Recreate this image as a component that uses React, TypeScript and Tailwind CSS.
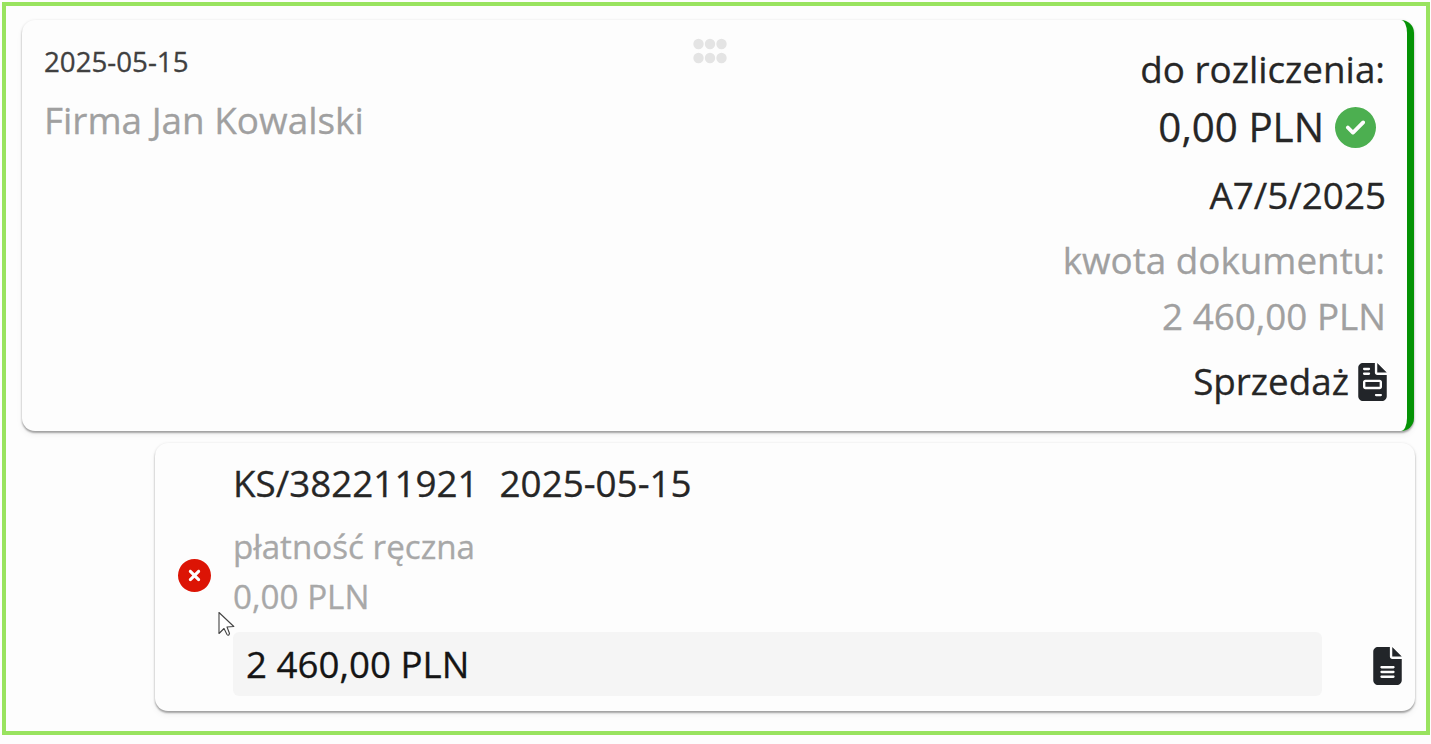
import { FaCircleCheck, FaCircleXmark, FaFileInvoice, FaFileLines } from 'react-icons/fa6';

const cardClass =
  'rounded-[13px] bg-[#fdfdfd] shadow-[0_2px_2px_rgba(0,0,0,0.32),0_0_3px_rgba(0,0,0,0.08),0_4px_6px_rgba(0,0,0,0.05)]';

function DragHandle() {
  return (
    <svg viewBox="0 0 34 26" className="absolute left-[671px] top-[18px] h-[26px] w-[34px] fill-[#e4e4e4]">
      {[6, 20].map((y) => [5.5, 17, 28.5].map((x) => <circle key={`${x}-${y}`} cx={x} cy={y} r="5.2" />))}
    </svg>
  );
}

function Cursor() {
  return (
    <svg viewBox="0 0 17 26" className="absolute left-[63px] top-[168px] h-[26px] w-[17px]">
      <path
        d="M1 1.5V22.5L6 17.5L9 23.5Q10.5 25.5 11.5 22.5L9 16L15.8 15.5Z"
        fill="#fff"
        stroke="#444"
        strokeWidth="1.1"
        strokeLinejoin="round"
      />
    </svg>
  );
}

function DocumentCard() {
  return (
    <section className={`${cardClass} relative flex h-[411px] justify-between border-r-[7px] border-[#059305] pl-[22px] pr-[21px] pt-5`}>
      <DragHandle />
      <div>
        <div className="text-[27.7px] leading-[42px] text-[#404040]">2025-05-15</div>
        <div className="text-[36.9px] leading-[76px] text-[#a0a0a0]">Firma Jan Kowalski</div>
      </div>
      <div className="flex flex-col items-end whitespace-nowrap pt-px text-[36.8px] text-[#262626]">
        <div className="pr-px leading-[56px]">do rozliczenia:</div>
        <div className="flex items-center gap-[11px] pr-[10px] text-[40.3px] leading-[60px]">
          0,00 PLN
          <FaCircleCheck className="size-[41px] text-[#4caf50]" />
        </div>
        <div className="leading-[76px]">A7/5/2025</div>
        <div className="pr-px leading-[55px] text-[#a0a0a0]">kwota dokumentu:</div>
        <div className="leading-[56px] text-[#a0a0a0]">2 460,00 PLN</div>
        <div className="-mr-px flex items-center gap-[9px] leading-[75px]">
          Sprzedaż
          <FaFileInvoice className="h-[38px] w-[29px] text-[#222529]" />
        </div>
      </div>
    </section>
  );
}

function PaymentCard() {
  return (
    <section className={`${cardClass} relative ml-[133px] mt-3 flex h-[268px] w-[1260px] items-start whitespace-nowrap`}>
      <FaCircleXmark className="ml-[23px] mt-[116px] size-[33px] shrink-0 text-[#dc1405]" />
      <Cursor />
      <div className="ml-[22px] w-[1089px] pt-[9px]">
        <div className="flex gap-[21px] text-[36.8px] leading-[63px] text-[#262626]">
          <span>KS/382211921</span>
          <span>2025-05-15</span>
        </div>
        <div className="mt-[7px] text-[33.2px] leading-[49px] text-[#a8a8a8]">płatność ręczna</div>
        <div className="text-[33.2px] leading-[51px] text-[#a8a8a8]">0,00 PLN</div>
        <div className="mt-[10px] h-16 rounded-md bg-[#f5f5f5] pl-[13px] text-[36.7px] leading-[64px] text-[#151515]">2 460,00 PLN</div>
      </div>
      <FaFileLines className="ml-[51px] mt-[204px] h-[38px] w-[29px] shrink-0 text-[#222529]" />
    </section>
  );
}

export default function App() {
  return (
    <div className="h-[744px] w-[1431px] overflow-hidden bg-[#fdfdfd] pl-[2px] pt-[2px] font-['Open_Sans',sans-serif] [-webkit-text-stroke:0.3px]">
      <main className="h-[733px] w-[1428px] border-4 border-[#99e35f] pl-4 pr-3 pt-[14px]">
        <DocumentCard />
        <PaymentCard />
      </main>
    </div>
  );
}
